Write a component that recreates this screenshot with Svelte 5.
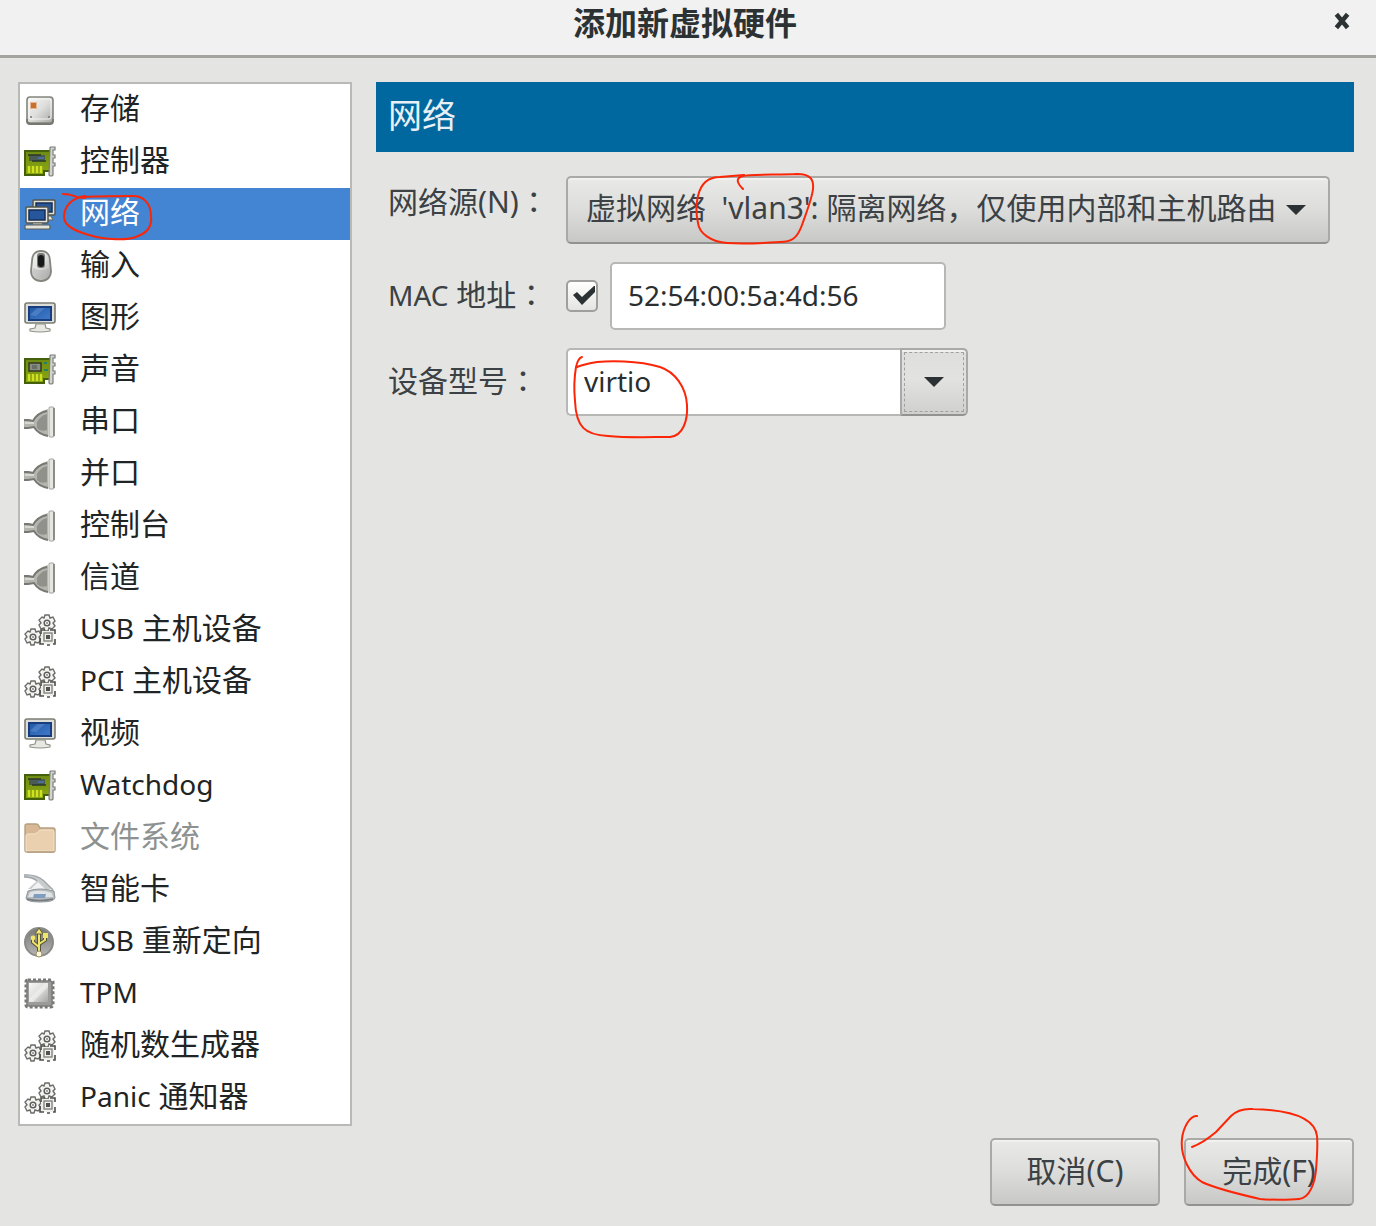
<script lang="ts">
	interface HardwareItem {
		latin?: string;
		label?: string;
		icon: string;
		disabled?: boolean;
	}

	const items: HardwareItem[] = [
		{ label: '存储', icon: 'disk' },
		{ label: '控制器', icon: 'card' },
		{ label: '网络', icon: 'network' },
		{ label: '输入', icon: 'mouse' },
		{ label: '图形', icon: 'display' },
		{ label: '声音', icon: 'sound' },
		{ label: '串口', icon: 'plug' },
		{ label: '并口', icon: 'plug' },
		{ label: '控制台', icon: 'plug' },
		{ label: '信道', icon: 'plug' },
		{ latin: 'USB', label: '主机设备', icon: 'gears' },
		{ latin: 'PCI', label: '主机设备', icon: 'gears' },
		{ label: '视频', icon: 'display' },
		{ latin: 'Watchdog', icon: 'card' },
		{ label: '文件系统', icon: 'folder', disabled: true },
		{ label: '智能卡', icon: 'smartcard' },
		{ latin: 'USB', label: '重新定向', icon: 'usb' },
		{ latin: 'TPM', icon: 'chip' },
		{ label: '随机数生成器', icon: 'gears' },
		{ latin: 'Panic', label: '通知器', icon: 'gears' }
	];

	let selected = $state(2);
	let useMac = $state(true);
	let mac = $state('52:54:00:5a:4d:56');
	let model = $state('virtio');
</script>

{#snippet gear(x: number, y: number)}
	<g transform="translate({x} {y})">
		<path d="M-2-8H2L3-5 6-6 8-2 6 0 8 3 5 6 2 5 1 8H-2L-3 5-6 6-8 2-6 0-8-3-5-6-3-5Z" fill="#f4f4f2" stroke="#6b6b67" stroke-width="1.4"/>
		<circle r="2.8" fill="#fff" stroke="#5c5c58" stroke-width="1.5"/>
		<circle r=".9" fill="#777"/>
	</g>
{/snippet}

{#snippet icon(name: string)}
	<svg class="icon" viewBox="0 0 32 32" fill="none" aria-hidden="true">
		{#if name === 'disk'}
			<rect x="3" y="3" width="26" height="26" rx="3" fill="url(#silver)" stroke="#85857f" stroke-width="1.6"/>
			<path d="M3 25v2q0 3 3 3h20q3 0 3-3v-2" stroke="#77776f" stroke-width="1.8"/>
			<rect x="5" y="5" width="22" height="20" rx="2" stroke="#fff" opacity=".8"/>
			<rect x="6" y="8" width="7" height="7" fill="#e6b594"/>
			<rect x="7" y="9" width="5" height="5" fill="#c5702f"/>
			<path d="M6 23h2M24 23h2" stroke="#777" stroke-width="1.5"/>
		{:else if name === 'card' || name === 'sound'}
			<path d="M1 5h25v20h-6v4H1Z" fill="url(#board)" stroke="#45600d" stroke-width="2"/>
			{#if name === 'card'}
				<rect x="5" y="9" width="16" height="6" fill="#4b5a52"/>
				<path d="M4 9h13M8 15h14" stroke="#29382b" stroke-width="1.5"/>
				<path d="M14 12h6" stroke="#466f9d" stroke-width="2"/>
			{:else}
				<rect x="5" y="9" width="12" height="8" fill="#878d83" stroke="#34391f" stroke-width="1.5"/>
				<rect x="8" y="11" width="5" height="4" fill="#6a6e69"/>
				<path d="M20 9h3M20 16h4" stroke="#258166" stroke-width="2"/>
			{/if}
			<path d="M5 20v7M9 20v7M13 20v7M17 20v7" stroke="#d0e022" stroke-width="2.4"/>
			<path d="M26 2q0-1 1-1h4v3h-2v5h2v3h-2v5h2v3h-2v9q0 1-2 1t-2-1Z" fill="#d2d3cf" stroke="#7b7c79" stroke-width="1.2"/>
		{:else if name === 'network'}
			<rect x="9" y="2" width="22" height="15" rx="1" fill="#ddded6" stroke="#54564b" stroke-width="1.5"/>
			<rect x="12" y="5" width="16" height="9" fill="#285698" stroke="#172e55" stroke-width="1.5"/>
			<path d="M22 18h5l2 4h-7" fill="#e3e4dd" stroke="#606257"/>
			<rect x="2" y="9" width="22" height="16" rx="1" fill="#e6e6df" stroke="#54564b" stroke-width="1.5"/>
			<rect x="5" y="12" width="16" height="10" fill="#26569b" stroke="#172e55" stroke-width="1.5"/>
			<path d="M9 25h9v3H9Z" fill="#9c9d90"/>
			<rect x="1" y="27" width="25" height="4" rx="1" fill="#e3e4dc" stroke="#5c5d52" stroke-width="1.2"/>
		{:else if name === 'mouse'}
			<path d="M17 1c6 0 9 4 9 10l1 10c0 6-4 10-10 10S7 27 7 21L8 11C8 5 11 1 17 1Z" fill="url(#silver)" stroke="#85857f" stroke-width="1.8"/>
			<path d="M9 18q8 4 16 0l1 4q-1 7-9 7t-9-7Z" fill="#aaa" opacity=".45"/>
			<rect x="13" y="3" width="8" height="15" rx="3" fill="#777"/>
			<rect x="14" y="5" width="6" height="12" rx="3" fill="#171918"/>
		{:else if name === 'display'}
			<rect x="1" y="1" width="30" height="20" rx="2" fill="#deded8" stroke="#7a7c74" stroke-width="1.6"/>
			<rect x="5" y="5" width="22" height="13" fill="url(#screen)" stroke="#193e7d" stroke-width="2"/>
			<path d="m6 13 7-7h8l-9 8Z" fill="#7fa9de" opacity=".35"/>
			<path d="M12 22h9l1 4 4 1v2q-10 2-20 0v-2l5-1Z" fill="#e8e8e3" stroke="#92938b" stroke-width="1.2"/>
		{:else if name === 'plug'}
			<path d="M0 13h4l5 1q4-8 15-11v27Q13 28 9 21l-5 1H0Z" fill="#b4b5af"/>
			<path d="M0 14h4l5 1q4-8 14-10M0 22h4l6-1q4 7 14 9" stroke="#777871" stroke-width="1.8"/>
			<path d="M1 17h9" stroke="#d7d8d2" stroke-width="2"/>
			<path d="M13 16q3-6 10-8v16q-7 2-10-2Z" fill="#90918a"/>
			<rect x="25" y="1" width="5" height="30" rx="1" fill="#e5e6e1" stroke="#a2a39c"/>
			<path d="M30 2v28" stroke="#777872" stroke-width="1.5"/>
		{:else if name === 'gears'}
			{@render gear(23, 9)}
			{@render gear(9, 23)}
			<rect x="17" y="17" width="13" height="13" fill="#efefed"/>
			<path d="M21 16h-4v4M26 16h5v4M16 24v6h4M23 31h3M29 30h2v-5" stroke="#4d4e49" stroke-width="1.6"/>
			<rect x="20" y="19" width="8" height="8" stroke="#85867e" stroke-width="1.4"/>
			<rect x="22" y="21" width="4" height="4" fill="#51524e"/>
		{:else if name === 'folder'}
			<path d="M1 28V4q0-2 2-2h9q2 0 3 2l1 2h13q2 0 2 2v20q0 2-2 2H3q-2 0-2-2Z" fill="#d9b995" stroke="#b6a080" stroke-width="1.4"/>
			<path d="M2 29V14q0-2 2-2h6q2 0 4-2l2-2h12q2 0 2 2v19Z" fill="#ead0ae" stroke="#f4e3cc"/>
			<path d="M3 30h27" stroke="#b69f80" stroke-width="1.5"/>
		{:else if name === 'smartcard'}
			<path d="M0 1q12-1 20 6l9 8H4l9-8Q9 3 0 3Z" fill="#c9cccd"/>
			<path d="M0 1q12-1 20 6l9 9M0 3q9 0 13 4" stroke="#a0a5a9" stroke-width="1.4"/>
			<path d="m14 8 9 9H5Z" fill="#f1f3f3"/>
			<path d="M4 17q12-4 26 0l1 7q-1 4-15 4T2 24Z" fill="#b7bbbe" stroke="#90969a"/>
			<path d="M6 18q11-3 22 1l1 4H4Z" fill="#dfe3e4"/>
			<path d="M10 20h12l-1 4H9Z" fill="#809dbf"/>
			<path d="M3 25q12 3 26 0" stroke="#747a7e" stroke-width="1.6"/>
		{:else if name === 'usb'}
			<circle cx="15" cy="16" r="14" fill="url(#grey)" stroke="#8a8a86" stroke-width="2"/>
			<path d="M15 27V7M15 21l-6-5v-4M15 18l6-4v-4" stroke="#55543f" stroke-width="4"/>
			<path d="M15 27V6M15 21l-6-5v-4M15 18l6-4v-4" stroke="#eee46a" stroke-width="2"/>
			<path d="m11 8 4-6 4 6Z" fill="#f1e675" stroke="#66613b"/>
			<circle cx="9" cy="12" r="2.4" fill="#eee46a"/>
			<path d="M19 7h5v5h-5Z" fill="#eee46a"/>
			<circle cx="15" cy="28" r="3" fill="#fff8d8" stroke="#99906a"/>
		{:else if name === 'chip'}
			<rect x="2" y="2" width="27" height="27" rx="2" stroke="#777876" stroke-width="3" stroke-dasharray="3 2"/>
			<rect x="3" y="3" width="25" height="25" rx="2" fill="#9b9c9a" stroke="#7d7e7c" stroke-width="1.6"/>
			<rect x="5" y="5" width="19" height="19" fill="url(#silver)"/>
			<path d="M5 21 21 5h3v4L9 24H5Z" fill="#fff" opacity=".4"/>
		{/if}
	</svg>
{/snippet}

<svg class="defs" width="0" height="0" aria-hidden="true">
	<defs>
		<linearGradient id="silver" x1="0" y1="0" x2="1" y2="1">
			<stop offset="0" stop-color="#f7f7f6"/>
			<stop offset=".5" stop-color="#dededd"/>
			<stop offset="1" stop-color="#a5a5a3"/>
		</linearGradient>
		<linearGradient id="grey" x1="0" y1="0" x2="0" y2="1">
			<stop offset="0" stop-color="#777775"/>
			<stop offset="1" stop-color="#b4b4b2"/>
		</linearGradient>
		<linearGradient id="board" x1="0" y1="0" x2="0" y2="1">
			<stop offset="0" stop-color="#6d8b12"/>
			<stop offset="1" stop-color="#8ea812"/>
		</linearGradient>
		<linearGradient id="screen" x1="0" y1="0" x2="1" y2="1">
			<stop offset="0" stop-color="#2459a7"/>
			<stop offset="1" stop-color="#3f7bcb"/>
		</linearGradient>
	</defs>
</svg>

<div class="dialog" lang="zh-CN">
	<header class="titlebar">
		<h1>添加新虚拟硬件</h1>
		<button class="close" aria-label="关闭">
			<svg viewBox="0 0 16 16" stroke="currentColor" stroke-width="4"><path d="m3 2 10 12M13 2 3 14"/></svg>
		</button>
	</header>

	<div class="body">
		<ul class="hardware">
			{#each items as item, i}
				<li>
					<button class="item" class:selected={selected === i} disabled={item.disabled} onclick={() => (selected = i)}>
						{@render icon(item.icon)}
						<span class="name">
							{#if item.latin}<span class="latin">{item.latin}</span>{/if}
							{item.label ?? ''}
						</span>
					</button>
					{#if i === 2}
						<svg class="mark" viewBox="0 0 132 52" width="132" height="52" aria-hidden="true">
							<path d="M43 6C55 6 54 10 65 10M65 8C51 10 44 19 44 29 44 38 55 43 69 47 85 52 108 53 118 48 129 44 132 36 131 28 131 15 123 8 113 8Q90 8 61 9"/>
						</svg>
					{/if}
				</li>
			{/each}
		</ul>

		<main class="details">
			<h2>网络</h2>
			<div class="form">
				<label class="top" for="source">网络源(N)<span class="colon" lang="zh-TW">：</span></label>
				<div class="source">
					<select id="source">
						<option>虚拟网络&nbsp; 'vlan3': 隔离网络，仅使用内部和主机路由</option>
					</select>
					<svg class="arrow" viewBox="0 0 20 10" aria-hidden="true"><path d="M0 0h20L10 10Z"/></svg>
					<svg class="mark" viewBox="0 0 248 68" width="248" height="68" aria-hidden="true">
						<path d="M177 13C171 7 169 2 177 0 183-2 214-1 231-2 244-2 248 3 247 13 246 23 239 40 236 49 231 63 225 66 214 66 199 67 179 68 161 67 145 66 133 57 132 47 130 38 130 28 132 20 135 7 142 1 154 1L178-1"/>
					</svg>
				</div>

				<label for="mac"><span class="latin">MAC</span> 地址<span class="colon" lang="zh-TW">：</span></label>
				<div class="mac">
					<input type="checkbox" aria-label="MAC 地址" bind:checked={useMac}>
					<input type="text" id="mac" class="field" bind:value={mac}>
				</div>

				<label for="model">设备型号<span class="colon" lang="zh-TW">：</span></label>
				<div class="combo">
					<input type="text" id="model" class="field" bind:value={model}>
					<button aria-label="设备型号">
						<svg viewBox="0 0 20 10" aria-hidden="true"><path d="M0 0h20L10 10Z"/></svg>
					</button>
					<svg class="mark" viewBox="0 0 122 90" width="122" height="90" aria-hidden="true">
						<path d="M16 9Q12 10 10 19C8 31 8 43 9 53 10 79 19 87 42 88 61 90 85 89 104 89 117 88 122 72 121 57 120 39 109 24 94 19 71 12 42 13 31 14Q19 16 11 19"/>
					</svg>
				</div>
			</div>
		</main>
	</div>

	<footer class="actions">
		<button class="action">取消(C)</button>
		<div class="finish">
			<button class="action">完成(F)</button>
			<svg class="mark" viewBox="0 0 134 68" width="134" height="68" aria-hidden="true">
				<path d="M13-22C6-23-1-10-2 1-4 18 6 37 18 44 30 50 63 58 76 61 86 62 106 62 115 61 126 60 131 44 132 32 133 18 134 8 133-2 131-19 111-28 69-29Q55-30 47-22L32-6Q19 5 8 9"/>
			</svg>
		</div>
	</footer>
</div>

<style>
	:global(body) {
		background: #e4e5e2;
	}

	.dialog {
		min-height: 100vh;
		box-sizing: border-box;
		display: flex;
		flex-direction: column;
		background: #e4e5e2;
		color: #3b4144;
		font-family: "Noto Sans", "Noto Sans CJK SC", sans-serif;
		font-size: 30px;
		line-height: 48px;
	}

	button,
	input,
	select {
		box-sizing: border-box;
		margin: 0;
		font: inherit;
		color: inherit;
	}

	.defs {
		position: absolute;
	}

	.titlebar {
		display: grid;
		grid-template-columns: 1fr auto 1fr;
		align-items: center;
		padding: 0 24px 13px 18px;
		background: #f1f1f1;
		border-bottom: 3px solid #a3a39f;
	}

	h1 {
		grid-column: 2;
		margin: 0;
		color: #2c3234;
		font-family: "Noto Sans CJK SC", sans-serif;
		font-size: 32px;
		line-height: 42px;
		font-weight: 700;
	}

	.close {
		justify-self: end;
		display: flex;
		padding: 0;
		border: 0;
		background: none;
		color: #2c3234;
	}

	.close svg {
		width: 20px;
		height: 18px;
	}

	.body {
		flex: 1;
		display: flex;
		align-items: flex-start;
		gap: 24px;
		padding: 24px 22px 12px 18px;
	}

	.hardware {
		flex: 0 0 334px;
		box-sizing: border-box;
		margin: 0;
		padding: 0;
		list-style: none;
		background: #fff;
		border: 2px solid #b9bab6;
	}

	li {
		position: relative;
	}

	.item {
		display: flex;
		align-items: center;
		gap: 24px;
		width: 100%;
		height: 52px;
		padding: 0 4px;
		border: 0;
		background: none;
		color: #202424;
		text-align: left;
		white-space: nowrap;
	}

	.item.selected {
		background: #4384d3;
		color: #fff;
	}

	.item:disabled {
		color: #8d9190;
	}

	.name {
		padding-bottom: 4px;
	}

	.latin {
		font-size: 28px;
	}

	.icon {
		flex: none;
		width: 32px;
		height: 32px;
	}

	.mark {
		position: absolute;
		left: 0;
		top: 0;
		overflow: visible;
		pointer-events: none;
		z-index: 1;
	}

	.mark path {
		fill: none;
		stroke: #fb2608;
		stroke-width: 2;
		stroke-linecap: round;
		stroke-linejoin: round;
	}

	.details {
		flex: 1;
		min-width: 0;
	}

	h2 {
		margin: 0 0 24px;
		padding: 0 12px 4px;
		background: #00689f;
		color: #e8f0f5;
		font-size: 34px;
		line-height: 66px;
		font-weight: 400;
	}

	.form {
		display: grid;
		grid-template-columns: 178px minmax(0, 1fr);
		align-items: center;
		row-gap: 18px;
		padding-left: 12px;
	}

	label {
		padding-bottom: 4px;
		white-space: nowrap;
	}

	.top {
		align-self: start;
	}

	.colon {
		font-family: "Noto Sans CJK TC", sans-serif;
	}

	.source,
	.mac,
	.combo {
		position: relative;
		display: flex;
		align-items: center;
		justify-self: start;
		max-width: 100%;
	}

	.source {
		width: 764px;
	}

	select,
	.action,
	.combo button {
		border: 2px solid #a9aaa7;
		border-bottom-color: #929390;
		border-radius: 5px;
		background: linear-gradient(#e9e9e7, #dededc 45%, #c8c8c6);
		box-shadow: inset 0 2px #f1f1ef;
	}

	select {
		appearance: none;
		width: 100%;
		height: 68px;
		padding: 0 48px 4px 18px;
	}

	.arrow {
		position: absolute;
		right: 24px;
		width: 20px;
		height: 10px;
		pointer-events: none;
	}

	.arrow path,
	.combo button path {
		fill: #2c3234;
	}

	.field {
		height: 68px;
		padding: 0 16px 2px;
		border: 2px solid #b7b8b5;
		border-radius: 5px;
		background: #fff;
		color: #2a2e2f;
		font-size: 28px;
	}

	.mac {
		gap: 12px;
	}

	.mac .field {
		width: 336px;
	}

	input[type="checkbox"] {
		appearance: none;
		flex: none;
		width: 32px;
		height: 32px;
		border: 2px solid #9fa09d;
		border-radius: 5px;
		background: linear-gradient(#fff, #e4e4e2);
	}

	input[type="checkbox"]:checked {
		background: url("data:image/svg+xml,%3Csvg xmlns='http://www.w3.org/2000/svg' viewBox='0 0 28 28'%3E%3Cpath d='M5 13l4-3 5 5L26 4h1v6L14 23Z' fill='%232c3234'/%3E%3C/svg%3E"), linear-gradient(#fff, #e4e4e2);
	}

	.combo .field {
		width: 334px;
		border-right: 0;
		border-radius: 5px 0 0 5px;
	}

	.combo button {
		display: flex;
		align-items: center;
		justify-content: center;
		width: 68px;
		height: 68px;
		padding: 0;
		border-radius: 0 5px 5px 0;
		background: linear-gradient(#dededc, #e2e2e0 45%, #d0d0ce);
		outline: 1px dashed #a0a19e;
		outline-offset: -5px;
	}

	.combo button svg {
		width: 20px;
		height: 10px;
	}

	.actions {
		display: flex;
		justify-content: flex-end;
		gap: 24px;
		padding: 0 22px 20px;
	}

	.finish {
		position: relative;
	}

	.action {
		display: block;
		width: 170px;
		height: 68px;
		padding: 0 0 2px;
	}
</style>
